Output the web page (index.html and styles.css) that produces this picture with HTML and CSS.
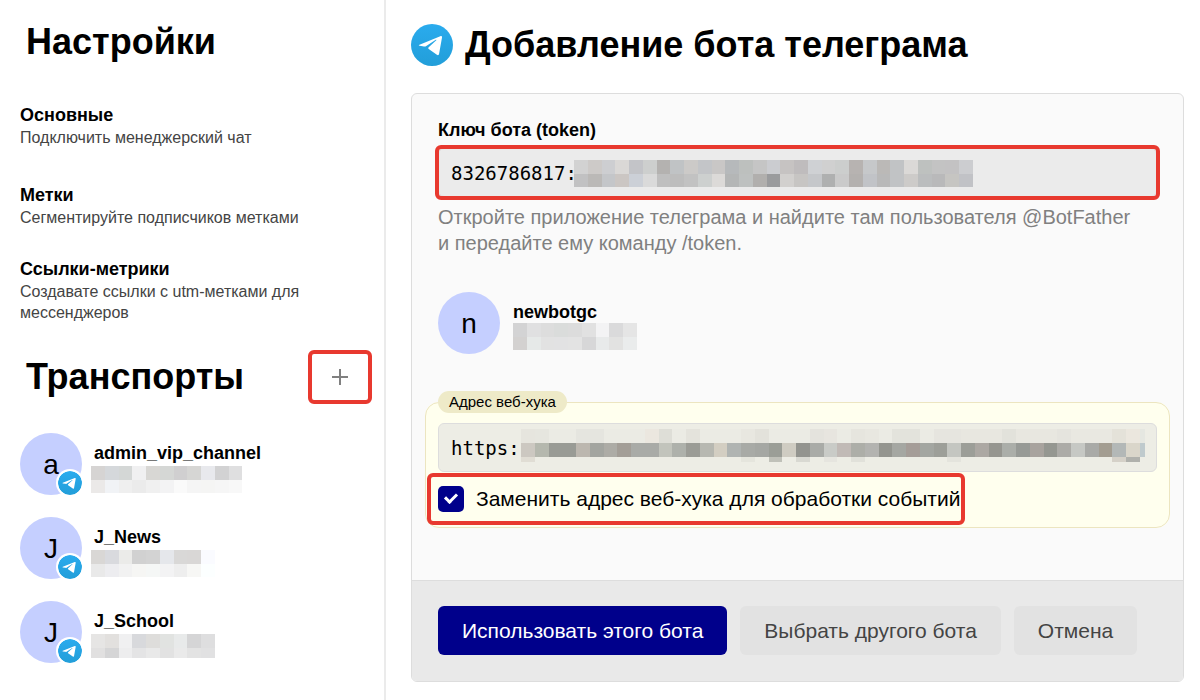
FILE: index.html
```html
<!DOCTYPE html>
<html lang="ru">
<head>
    <meta charset="UTF-8">
    <meta name="viewport" content="width=device-width, initial-scale=1.0">
    <title>Добавление бота телеграма</title>
    <link rel="stylesheet" href="styles.css">
</head>
<body>
    <!-- Иконка телеграма, используется через <use> -->
    <svg class="sprite" aria-hidden="true">
        <defs>
            <linearGradient id="tg-bg" x1="0" y1="0" x2="0" y2="1">
                <stop offset="0" stop-color="#2aabee"/>
                <stop offset="1" stop-color="#229ed9"/>
            </linearGradient>
        </defs>
        <symbol id="telegram" viewBox="0 0 42 42">
            <circle cx="21" cy="21" r="21" fill="url(#tg-bg)"/>
            <path fill="#fff" d="M8.500 20.700 29.300 12.200c1.200-.4 1.900.2 1.700 1.400l-2.900 16.200c-.2 1.400-1.100 1.700-2.200 1l-8.200-5.900c-.6-.5-.6-1 0-1.600l7.600-7.100c.4-.4 0-.7-.5-.4l-9.900 6.400c-.6.4-1.200.4-1.900.2l-4.300-.6c-1.200-.3-1.200-.700-.200-1.100z"/>
        </symbol>
    </svg>

    <div class="page">
        <aside class="sidebar">
            <h2 class="sidebar-title">Настройки</h2>
            <nav class="menu">
                <a href="#main" class="menu-item">
                    <strong>Основные</strong>
                    <span>Подключить менеджерский чат</span>
                </a>
                <a href="#tags" class="menu-item">
                    <strong>Метки</strong>
                    <span>Сегментируйте подписчиков метками</span>
                </a>
                <a href="#links" class="menu-item">
                    <strong>Ссылки-метрики</strong>
                    <span>Создавате ссылки с utm-метками для мессенджеров</span>
                </a>
            </nav>

            <div class="transports-header">
                <h2 class="sidebar-title">Транспорты</h2>
                <button type="button" class="add-btn highlight" aria-label="Добавить транспорт">
                    <svg width="16" height="16" viewBox="0 0 16 16"><path d="M8 0v16M0 8h16" stroke="#808080" stroke-width="2"/></svg>
                </button>
            </div>
            <div class="transports">
                <a href="#admin" class="bot">
                    <span class="avatar">a<svg class="badge"><use href="#telegram"/></svg></span>
                    <span class="bot-info">
                        <strong>admin_vip_channel</strong>
                        <svg class="mosaic" data-mosaic="admin"></svg>
                    </span>
                </a>
                <a href="#news" class="bot">
                    <span class="avatar">J<svg class="badge"><use href="#telegram"/></svg></span>
                    <span class="bot-info">
                        <strong>J_News</strong>
                        <svg class="mosaic" data-mosaic="news"></svg>
                    </span>
                </a>
                <a href="#school" class="bot">
                    <span class="avatar">J<svg class="badge"><use href="#telegram"/></svg></span>
                    <span class="bot-info">
                        <strong>J_School</strong>
                        <svg class="mosaic" data-mosaic="school"></svg>
                    </span>
                </a>
            </div>
        </aside>

        <main class="content">
            <h1 class="title">
                <svg class="title-icon"><use href="#telegram"/></svg>
                Добавление бота телеграма
            </h1>

            <form class="card">
                <div class="card-body">
                    <label for="token" class="label">Ключ бота (token)</label>
                    <div class="field highlight">
                        <input type="text" id="token" class="input" value="8326786817:">
                        <svg class="mosaic token-mosaic" data-mosaic="token"></svg>
                    </div>
                    <p class="hint">Откройте приложение телеграма и найдите там пользователя @BotFather и передайте ему команду /token.</p>

                    <div class="bot new-bot">
                        <span class="avatar">n</span>
                        <span class="bot-info">
                            <strong>newbotgc</strong>
                            <svg class="mosaic" data-mosaic="newbot"></svg>
                        </span>
                    </div>

                    <fieldset class="webhook">
                        <legend>Адрес веб-хука</legend>
                        <div class="field">
                            <input type="text" class="input" value="https:" aria-label="Адрес веб-хука">
                            <svg class="mosaic webhook-mosaic" data-mosaic="webhook"></svg>
                        </div>
                        <label class="check highlight">
                            <input type="checkbox" checked>
                            Заменить адрес веб-хука для обработки событий
                        </label>
                    </fieldset>
                </div>
                <div class="card-footer">
                    <button type="button" class="btn btn-primary">Использовать этого бота</button>
                    <button type="button" class="btn">Выбрать другого бота</button>
                    <button type="button" class="btn">Отмена</button>
                </div>
            </form>
        </main>
    </div>

    <script src="script.js"></script>
</body>
</html>
```

FILE: styles.css
```css
* {
    box-sizing: border-box;
}

body {
    margin: 0;
    font-family: "Liberation Sans", Arial, sans-serif;
    font-size: 20px;
    color: #000;
    background: #fff;
}

.sprite {
    position: absolute;
    width: 0;
    height: 0;
}

.page {
    display: flex;
    min-height: 100vh;
}

/* Левая колонка */
.sidebar {
    flex: none;
    width: 386px;
    padding: 20px 12px 20px 20px;
    border-right: 2px solid #ebebeb;
}

.sidebar-title {
    margin: 0;
    padding-left: 6px;
    font-size: 36px;
    line-height: 44px;
}

.menu {
    display: flex;
    flex-direction: column;
    gap: 30px;
    margin-top: 40px;
    margin-bottom: 30px;
}

.menu-item {
    padding-right: 30px;
    font-size: 16px;
    line-height: 21px;
    color: #444;
    text-decoration: none;
}

.menu-item:first-child {
    margin-bottom: 6px;
}

.menu-item strong,
.menu-item span {
    display: block;
}

.menu-item strong {
    font-size: 18px;
    line-height: 23px;
    color: #000;
}

.transports-header {
    display: flex;
    align-items: center;
    justify-content: space-between;
    padding-right: 3px;
}

.add-btn {
    display: flex;
    align-items: center;
    justify-content: center;
    width: 58px;
    height: 48px;
    padding: 0;
    border: none;
    background: none;
    cursor: pointer;
}

.transports {
    display: flex;
    flex-direction: column;
    gap: 22px;
    margin-top: 32px;
}

/* Бот: аватар и имя */
.bot {
    display: flex;
    align-items: flex-start;
    gap: 13px;
    color: #000;
    text-decoration: none;
}

.avatar {
    position: relative;
    flex: none;
    width: 62px;
    height: 62px;
    border-radius: 50%;
    background: #c5cfff;
    font-size: 28px;
    line-height: 64px;
    text-align: center;
}

.badge {
    position: absolute;
    right: -2px;
    bottom: -2px;
    width: 28px;
    height: 28px;
    padding: 2px;
    border-radius: 50%;
    background: #fff;
}

.bot-info {
    display: flex;
    flex-direction: column;
    padding-top: 9px;
}

.bot-info strong {
    font-size: 18px;
    line-height: 22px;
}

.transports .bot-info {
    gap: 2px;
    margin-left: -4px;
}

.transports .bot-info strong {
    padding-left: 3px;
}

.mosaic {
    display: block;
    shape-rendering: crispEdges;
}

/* Основная часть */
.content {
    flex: 1;
    padding: 20px 16px 18px 25px;
}

.title {
    display: flex;
    align-items: center;
    gap: 12px;
    margin: 0 0 24px;
    font-size: 36px;
    line-height: 49px;
}

.title-icon {
    width: 42px;
    height: 42px;
}

.card {
    border: 1px solid #ddd;
    border-radius: 6px;
    background: #fafafa;
    overflow: hidden;
}

.card-body {
    padding: 24px 26px 52px;
}

.label {
    display: block;
    margin-bottom: 6px;
    font-size: 18px;
    font-weight: bold;
    line-height: 24px;
}

.field {
    position: relative;
}

.input {
    display: block;
    width: 100%;
    height: 49px;
    padding: 0 12px;
    border: 1px solid #ddd;
    border-radius: 6px;
    background: rgba(220, 220, 220, 0.5);
    font-family: "DejaVu Sans Mono", monospace;
    font-size: 19px;
    color: #000;
    outline: none;
}

.token-mosaic {
    position: absolute;
    left: 136px;
    top: 12px;
}

.webhook-mosaic {
    position: absolute;
    left: 83px;
    top: 6px;
}

.hint {
    margin: 7px 0 36px;
    padding-right: 12px;
    line-height: 26px;
    color: #808080;
}

.new-bot {
    margin-bottom: 37px;
}

.webhook {
    min-width: 0;
    margin: 0 -13px;
    padding: 10px 12px 5px;
    border: 1px solid #ece5c0;
    border-radius: 14px;
    background: #ffffee;
}

.webhook legend {
    padding: 0 11px;
    border-radius: 11px;
    background: #eeeac8;
    font-size: 15px;
    line-height: 22px;
}

.check {
    display: inline-flex;
    align-items: center;
    gap: 12px;
    height: 46px;
    margin-top: 4px;
    vertical-align: top;
    font-size: 21px;
}

.check input {
    appearance: none;
    position: relative;
    width: 26px;
    height: 26px;
    margin: 0;
    border-radius: 5px;
    background: #ccc;
}

.check input:checked {
    background: #00008b;
}

.check input:checked::after {
    content: "";
    position: absolute;
    left: 9px;
    top: 5px;
    width: 5px;
    height: 9px;
    border: solid #fff;
    border-width: 0 3px 3px 0;
    transform: rotate(45deg);
}

/* Красная рамка вокруг важных полей */
.highlight {
    position: relative;
}

.highlight::after {
    content: "";
    position: absolute;
    inset: -3px;
    border: 4px solid #e8392f;
    border-radius: 6px;
    pointer-events: none;
}

.check.highlight::after {
    left: -11px;
    right: -5px;
}

.card-footer {
    display: flex;
    gap: 13px;
    padding: 25px 26px 26px;
    border-top: 1px solid #ddd;
    background: #e9e9e9;
}

.btn {
    height: 49px;
    padding: 0 24px;
    border: none;
    border-radius: 6px;
    background: #e2e2e2;
    font-family: inherit;
    font-size: 21px;
    color: #444;
    cursor: pointer;
}

.btn-primary {
    background: #00008b;
    color: #fff;
}
```

FILE: script.js
```js
// Размер клетки мозаики, которой закрыты личные данные
const CELL = 13.75;

// Каждая строка: цвета клеток, "-" — пустая клетка
const mosaics = {
    admin: {
        width: 151, height: 27,
        rows: [
            'd6d4d3 d5d8db d4d7d6 f0f0f1 d8d7d4 d5d7d5 d0cfd0 d6d6d4 e8e9ed d2d2d3 dfdfe0',
            'ebe9e8 f1f3f6 efefef ebebeb f0f0f0 f3f3f4 fafafa f5f5f5 f5f5f4 f6f6f6 f8f8f8'
        ]
    },
    news: {
        width: 124, height: 27,
        rows: [
            'd9d7d5 d9dade ebebe9 d1d1d1 d3d3d3 e5e7eb d9d8d7 d9d7d6 fafbff',
            'e9e9e9 ededf0 f2f2f2 f6f6f4 f5f7f6 f3f3f4 eeeeee f7f7f5 fcffff'
        ]
    },
    school: {
        width: 124, height: 24,
        rows: [
            'e6e5e4 e2e0de f0f0f1 d8d9dc dedddb e1e3e1 e8eaea d5d5d6 dededf',
            'e1e0e0 d5d5d6 ededee e4e4e5 e9e9e9 e2e2e2 eaeaea e3e3e3 e1e1e2'
        ]
    },
    newbot: {
        width: 124, height: 27,
        rows: [
            'd3d3d4 e0e0e1 dddddd dadcdb dcdcdc e1e1e1 f3f3f4 dadadb e5e5e5',
            'd3d1d0 e6e9e8 e2e2e2 e2e2e3 e3e3e3 d7d7d8 e8eaea e2e2e1 eaecec'
        ]
    },
    token: {
        width: 399, height: 27,
        rows: [
            'd2d2d2 cdcac8 cdced1 dad8d6 c3c4c8 cdcfce b4b2b0 c0c3c5 cccac8 c3c5c8 c9c7c6 b6b9bb bdc0be c5c5c5 cbccd0 c6c3c2 bfbcbd cfd1d4 d0d0d0 cccecd b7b3b1 c6c8ca bbb9b7 c1c3c5 dbd9d7 bec1bf c3c3c3 c3c2c3 cccdd0',
            'c1c1c2 bbb9b7 c4c6c9 cbc6c3 ccd0d7 dadada bfbfbf bdbdbd c2c2c2 cdd0cf dcdad8 b4b6b6 bec1c0 b1afad 9a9b9d d2d0ce c7c5c3 c5c7ca afb0b0 cacaca b4b1af c1c3c7 b9b9b9 c1c3c5 cdcbc9 bbbdbe b9b9ba c6c5c2 c1c2c6'
        ]
    },
    webhook: {
        width: 624, height: 33,
        rows: [
            'e6e5de e6e6df ebebe4 ebebe4 e5e5df e5e5df ebebe4 ebebe4 ebebe4 ebe7df deded7 ebebe4 e4e3dc ebebe4 ebebe4 ebebe4 e8e7e0 e3e2db ebebe4 ebebe4 ebebe4 e4e3dd e7e5df ebebe4 e6e5de e8e7e0 ebebe4 e3e3dc e3e3dc ebebe4 e6e5df e6e5df e8e7e0 e8e7e0 e8e7e0 e2e2db e8e7e0 e8e7e0 e8e7e0 e5e4de e9e8e1 e9e8e1 e9e8e1 e4e2d9 ebe7de e5e7e1',
            'ccc8c1 b5b8ae 999b95 999b95 bcb7af a3a5a0 adaca6 a39e97 a9aba7 a9aba7 c2c4bc aeb1ab 9b9c96 b7b8b1 d3cec2 b0b4b2 a8aaa6 a5a7a3 9b9e97 cfccc2 93948f a9aba7 c9cbc7 c1bab6 adaea8 b3b3b0 94958f a5a7a2 a59d98 a3a6a1 9d9f99 c4c6c1 9c9e98 aca8a3 969690 abaea9 979a96 a8a39e 959791 acaba7 c6c8c4 a9aaa7 a39d91 b3b8b7 dad6ca bfcacd',
            'e0ddd4 - - - - - - - - - - - - - - - e5e5dd - c0c1b9 - d9d9d2 - e6e5df - e1e1da - - - - - - e4e4dd - - - - - - - - - - - d5d1c8 b0b1ac -'
        ]
    }
};

document.querySelectorAll('[data-mosaic]').forEach(svg => {
    const { width, height, rows } = mosaics[svg.dataset.mosaic];
    svg.setAttribute('width', width);
    svg.setAttribute('height', height);

    rows.forEach((row, y) => {
        row.split(' ').forEach((color, x) => {
            if (color === '-') return;
            const rect = document.createElementNS('http://www.w3.org/2000/svg', 'rect');
            rect.setAttribute('x', x * CELL);
            rect.setAttribute('y', y * CELL);
            rect.setAttribute('width', CELL);
            rect.setAttribute('height', CELL);
            rect.setAttribute('fill', '#' + color);
            svg.appendChild(rect);
        });
    });
});
```
